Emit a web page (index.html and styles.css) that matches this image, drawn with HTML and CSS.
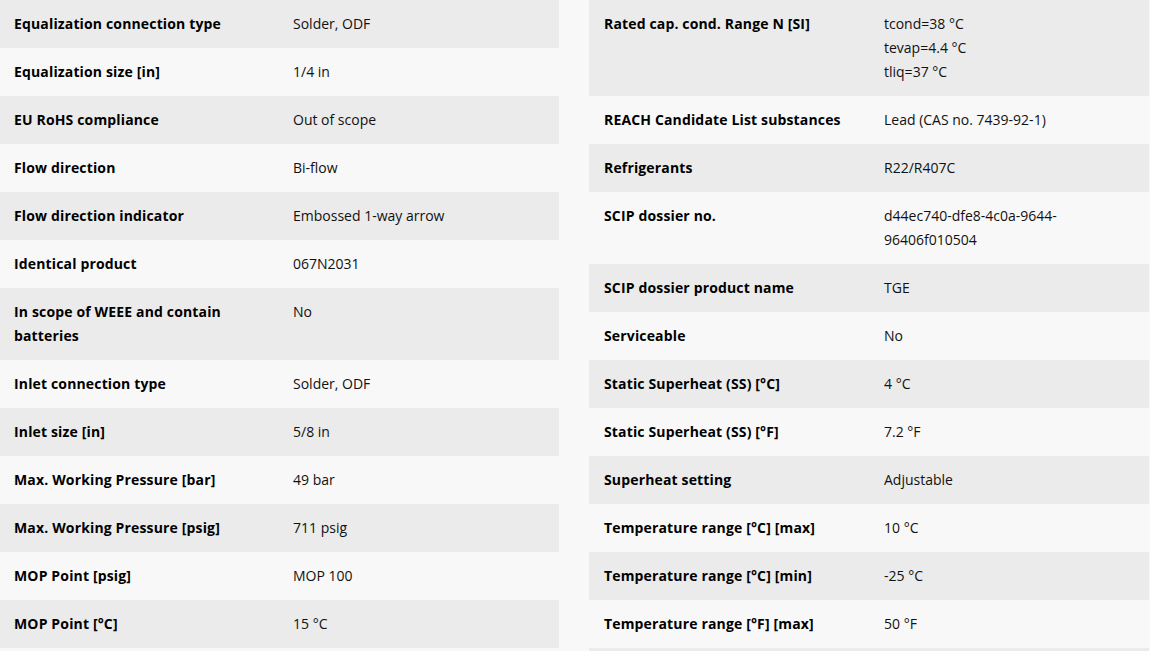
FILE: index.html
```html
<!DOCTYPE html>
<html lang="en">
<head>
<meta charset="utf-8">
<title>Specifications</title>
<link rel="stylesheet" href="styles.css">
</head>
<body>
<div class="specs">
  <div class="col">
    <div class="row"><div class="label">Equalization connection type</div><div class="value">Solder, ODF</div></div>
    <div class="row"><div class="label">Equalization size [in]</div><div class="value">1/4 in</div></div>
    <div class="row"><div class="label">EU RoHS compliance</div><div class="value">Out of scope</div></div>
    <div class="row"><div class="label">Flow direction</div><div class="value">Bi-flow</div></div>
    <div class="row"><div class="label">Flow direction indicator</div><div class="value">Embossed 1-way arrow</div></div>
    <div class="row"><div class="label">Identical product</div><div class="value">067N2031</div></div>
    <div class="row"><div class="label">In scope of WEEE and contain batteries</div><div class="value">No</div></div>
    <div class="row"><div class="label">Inlet connection type</div><div class="value">Solder, ODF</div></div>
    <div class="row"><div class="label">Inlet size [in]</div><div class="value">5/8 in</div></div>
    <div class="row"><div class="label">Max. Working Pressure [bar]</div><div class="value">49 bar</div></div>
    <div class="row"><div class="label">Max. Working Pressure [psig]</div><div class="value">711 psig</div></div>
    <div class="row"><div class="label">MOP Point [psig]</div><div class="value">MOP 100</div></div>
    <div class="row"><div class="label">MOP Point [°C]</div><div class="value">15 °C</div></div>
  </div>
  <div class="col col-right">
    <div class="row"><div class="label">Rated cap. cond. Range N [SI]</div><div class="value">tcond=38 °C<br>tevap=4.4 °C<br>tliq=37 °C</div></div>
    <div class="row"><div class="label">REACH Candidate List substances</div><div class="value">Lead (CAS no. 7439-92-1)</div></div>
    <div class="row"><div class="label">Refrigerants</div><div class="value">R22/R407C</div></div>
    <div class="row"><div class="label">SCIP dossier no.</div><div class="value">d44ec740-dfe8-4c0a-9644-96406f010504</div></div>
    <div class="row"><div class="label">SCIP dossier product name</div><div class="value">TGE</div></div>
    <div class="row"><div class="label">Serviceable</div><div class="value">No</div></div>
    <div class="row"><div class="label">Static Superheat (SS) [°C]</div><div class="value">4 °C</div></div>
    <div class="row"><div class="label">Static Superheat (SS) [°F]</div><div class="value">7.2 °F</div></div>
    <div class="row"><div class="label">Superheat setting</div><div class="value">Adjustable</div></div>
    <div class="row"><div class="label">Temperature range [°C] [max]</div><div class="value">10 °C</div></div>
    <div class="row"><div class="label">Temperature range [°C] [min]</div><div class="value">-25 °C</div></div>
    <div class="row"><div class="label">Temperature range [°F] [max]</div><div class="value">50 °F</div></div>
  </div>
</div>
</body>
</html>
```
FILE: styles.css
```css
html, body {
  margin: 0;
  padding: 0;
  background: #f8f8f8;
}
body {
  font-family: "Open Sans", "Noto Sans", sans-serif;
  font-size: 14px;
  line-height: 24px;
  color: #000;
  overflow: hidden;
}
.specs {
  display: flex;
  gap: 30px;
  align-items: flex-start;
}
.col {
  width: 559px;
  display: flex;
  flex-direction: column;
}
.col-right {
  width: 560px;
}
.col-right::after {
  content: "";
  display: block;
  height: 24px;
  background: #ebebeb;
}
.row {
  display: grid;
  grid-template-columns: 279px 1fr;
  padding: 12px 14px;
}
.row:nth-child(odd) {
  background: #ebebeb;
}
.label {
  font-weight: 700;
  letter-spacing: 0.15px;
  padding-right: 24px;
}
.col-right .row {
  grid-template-columns: 280px 1fr;
  padding: 12px 14px 12px 15px;
}
.value {
  font-weight: 400;
  color: #111;
}
```
